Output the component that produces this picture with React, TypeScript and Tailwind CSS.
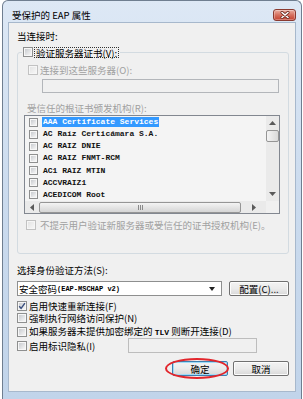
import React from "react";

const cjk = "font-['Noto_Sans_CJK_SC',sans-serif]";
const mono = "font-['Liberation_Mono','Noto_Sans_CJK_SC',monospace]";

function Check({
  checked = false,
  disabled = false,
  size = 10,
}: {
  checked?: boolean;
  disabled?: boolean;
  size?: number;
}) {
  const sz = size === 9 ? "w-[9px] h-[9px]" : "w-[10px] h-[10px]";
  return (
    <span
      className={`relative shrink-0 flex p-[1px] border ${sz} ${
        disabled ? "border-[#c2c2c2] bg-[#f6f6f6]" : "border-[#8e8f8f] bg-[#f7f7f7]"
      }`}
    >
      <span
        className={`flex-1 bg-gradient-to-br ${
          disabled ? "from-[#e4e4e4] to-[#f6f6f6]" : "from-[#c9ccd0] to-[#f6f6f6]"
        }`}
      />
      {checked && (
        <svg
          className="absolute left-[0px] top-[0px]"
          width="8"
          height="8"
          viewBox="0 0 8 8"
        >
          <path d="M1.2 4.2 L3.1 6.3 L6.9 1.2" stroke="#3a4f7e" strokeWidth="1.4" fill="none" />
        </svg>
      )}
    </span>
  );
}

function CloseBtn() {
  return (
    <span className="mt-[8px] w-[23px] h-[12px] rounded-[3px] border border-[#8a3a30] bg-gradient-to-b from-[#eab0a4] via-[#d6705f] to-[#c4412f] flex items-center justify-center shadow-[inset_0_0_0_1px_rgba(255,255,255,0.3)]">
      <svg width="10" height="8" viewBox="0 0 10 8">
        <path d="M2 1.5 L8 6.5 M8 1.5 L2 6.5" stroke="#6a2a20" strokeWidth="3" strokeLinecap="round" />
        <path d="M2 1.5 L8 6.5 M8 1.5 L2 6.5" stroke="#ffffff" strokeWidth="1.6" strokeLinecap="round" />
      </svg>
    </span>
  );
}

function Btn({ children, def = false }: { children: React.ReactNode; def?: boolean }) {
  return (
    <div
      className={`h-[15px] flex items-center justify-center rounded-[2px] border bg-gradient-to-b from-[#f3f3f3] via-[#ebebeb] to-[#d8d8d8] text-[9.5px] leading-[12px] ${
        def
          ? "border-[#3c7fb1] shadow-[inset_0_0_0_1px_#9fdcf8]"
          : "border-[#707070] shadow-[inset_0_0_0_1px_#fcfcfc]"
      }`}
    >
      {children}
    </div>
  );
}

const certs = [
  "AAA Certificate Services",
  "AC Raíz Certicámara S.A.",
  "AC RAIZ DNIE",
  "AC RAIZ FNMT-RCM",
  "AC1 RAIZ MTIN",
  "ACCVRAIZ1",
  "ACEDICOM Root",
];

function Tri({ dir }: { dir: "up" | "down" | "left" | "right" }) {
  const d =
    dir === "up"
      ? "M0 4 L3.5 0 L7 4 Z"
      : dir === "down"
      ? "M0 0 L7 0 L3.5 4 Z"
      : dir === "left"
      ? "M4 0 L4 7 L0 3.5 Z"
      : "M0 0 L4 3.5 L0 7 Z";
  const vert = dir === "up" || dir === "down";
  return (
    <svg width={vert ? 7 : 4} height={vert ? 4 : 7} viewBox={vert ? "0 0 7 4" : "0 0 4 7"}>
      <path d={d} fill="#5a5a5a" />
    </svg>
  );
}

function CertList() {
  return (
    <div className="ml-[6px] mt-[1px] w-[256px] h-[99px] border border-[#828790] bg-[#f4f4f4] flex flex-col">
      <div className="flex h-[85px]">
        <div className="flex-1 flex flex-col pl-[4px]">
          {certs.map((c, i) => (
            <div key={c} className="h-[12.2px] flex items-center gap-[4px]">
              <Check size={9} />
              <span
                className={`${mono} font-bold text-[8px] leading-[10px] whitespace-nowrap px-[1px] ${
                  i === 0 ? "bg-[#3399ff] text-white" : "text-[#111]"
                }`}
              >
                {c}
              </span>
            </div>
          ))}
        </div>
        <div className="w-[13px] flex flex-col items-stretch bg-[#eaeaea]">
          <div className="h-[13px] flex items-center justify-center">
            <Tri dir="up" />
          </div>
          <div className="mt-[1px] h-[12px] rounded-[2px] border border-[#959595] bg-gradient-to-r from-[#f4f4f4] to-[#d9d9d9]" />
          <div className="flex-1" />
          <div className="h-[14px] flex items-center justify-center">
            <Tri dir="down" />
          </div>
        </div>
      </div>
      <div className="flex h-[12px]">
        <div className="flex-1 flex items-center bg-[#eaeaea]">
          <div className="w-[14px] flex justify-center">
            <Tri dir="left" />
          </div>
          <div className="w-[202px] h-[11px] rounded-[2px] border border-[#959595] bg-gradient-to-b from-[#f4f4f4] to-[#d5d5d5] flex items-center justify-center gap-[1px]">
            <span className="w-[1px] h-[5px] bg-[#8a8a8a]" />
            <span className="w-[1px] h-[5px] bg-[#8a8a8a]" />
            <span className="w-[1px] h-[5px] bg-[#8a8a8a]" />
          </div>
          <div className="flex-1 flex justify-center">
            <Tri dir="right" />
          </div>
        </div>
        <div className="w-[13px] bg-[#f0f0f0]" />
      </div>
    </div>
  );
}

export default function App() {
  return (
    <div className={`w-[303px] h-[399px] overflow-hidden bg-white pl-[2px] ${cjk}`}>
      <div className="w-[300px] h-[399px] border-x border-t border-[#6f7e90] rounded-t-[6px] bg-gradient-to-b from-[#dde8f5] via-[#cbdbee] to-[#c1d4ea] flex flex-col">
        <div className="h-[21px] flex items-start justify-between pl-[9px] pr-[5px]">
          <span className="mt-[8px] text-[9.5px] leading-[12px] text-black">受保护的 EAP 属性</span>
          <CloseBtn />
        </div>
        <div className="ml-[5px] w-[288px] h-[370px] border border-[#a7b8cc] bg-[#f0f0f0] pl-[8px] flex flex-col text-[9.5px] text-black">
          <div className="mt-[6px] h-[14px] leading-[14px]">当连接时:</div>

          <fieldset className="mt-[3px] w-[272px] border border-[#d3dbe1] rounded-[3px] pb-[22px]">
            <legend className="ml-[4px] px-[1px] h-[12px]">
              <span className="flex items-center h-[12px]">
                <Check />
                <span className="ml-[1px] px-[1px] border border-dotted border-[#333] leading-[10px] h-[11px]">
                  验证服务器证书(V):
                </span>
              </span>
            </legend>
            <div className="flex flex-col text-[#a0a0a0]">
              <div className="mt-[6px] h-[12px] pl-[10px] flex items-center gap-[2px]">
                <Check disabled />
                <span className="leading-[12px]">连接到这些服务器(O):</span>
              </div>
              <div className="mt-[3px] ml-[24px] w-[237px] h-[14px] border border-[#b3b6ba] bg-[#f0f0f0]" />
              <div className="mt-[9px] h-[12px] pl-[9px] leading-[12px]">受信任的根证书颁发机构(R):</div>
              <CertList />
              <div className="mt-[5px] h-[12px] pl-[8px] flex items-center gap-[4px]">
                <Check disabled />
                <span className="leading-[12px] whitespace-nowrap">
                  不提示用户验证新服务器或受信任的证书授权机构(E)。
                </span>
              </div>
            </div>
          </fieldset>

          <div className="mt-[10px] h-[12px] leading-[12px]">选择身份验证方法(S):</div>
          <div className="mt-[5px] h-[15px] flex gap-[7px]">
            <div className="w-[205px] h-[15px] border border-[#8e8f8f] bg-white flex items-center pl-[1px] pr-[6px]">
              <span className="leading-[12px] whitespace-nowrap">安全密码</span>
              <span className={`${mono} font-bold text-[7px] leading-[10px] whitespace-nowrap`}>(EAP-MSCHAP v2)</span>
              <span className="flex-1" />
              <svg width="6" height="4" viewBox="0 0 6 4">
                <path d="M0 0 L6 0 L3 4 Z" fill="#222" />
              </svg>
            </div>
            <div className="w-[60px]">
              <Btn>配置(C)...</Btn>
            </div>
          </div>

          <div className="mt-[3.5px] h-[12.5px] flex items-center gap-[2px]">
            <Check checked />
            <span className="leading-[12px]">启用快速重新连接(F)</span>
          </div>
          <div className="h-[12.5px] flex items-center gap-[2px]">
            <Check />
            <span className="leading-[12px]">强制执行网络访问保护(N)</span>
          </div>
          <div className="h-[13.5px] pt-[1px] flex items-center gap-[2px]">
            <Check />
            <span className="leading-[12px] whitespace-nowrap">
              如果服务器未提供加密绑定的 <span className={`${mono} font-bold text-[8px]`}>TLV</span> 则断开连接(D)
            </span>
          </div>
          <div className="h-[15px] flex items-center gap-[2px]">
            <Check />
            <span className="leading-[12px] w-[97px]">启用标识隐私(I)</span>
            <div className="w-[129px] h-[15px] border border-[#bdbdbd] bg-[#f0f0f0]" />
          </div>

          <div className="relative mt-[8px] h-[15px] flex justify-end gap-[5px] pr-[6px]">
            <div className="w-[56px]">
              <Btn def>确定</Btn>
            </div>
            <div className="w-[56px]">
              <Btn>取消</Btn>
            </div>
            <div className="absolute left-[148px] top-[-3px] w-[64px] h-[21px] rounded-[50%] border-2 border-[#e2262c]" />
          </div>
        </div>
      </div>
    </div>
  );
}
